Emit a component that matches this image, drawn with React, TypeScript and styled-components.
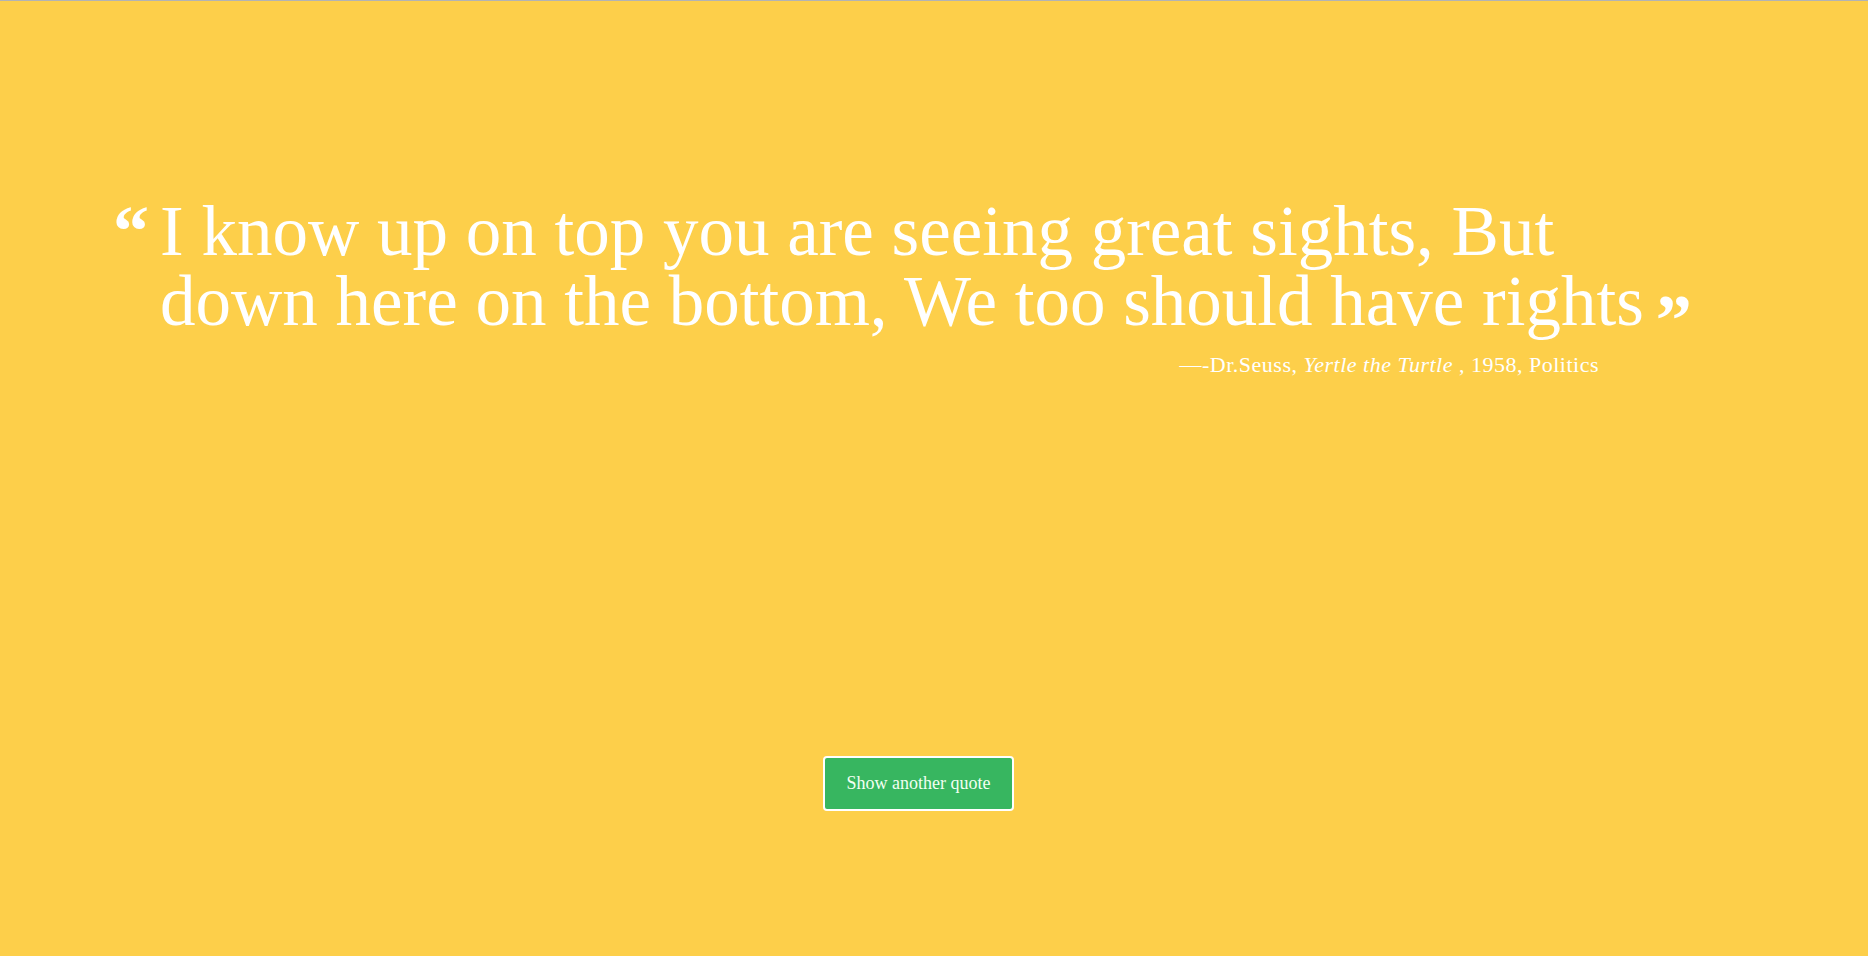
import React from "react";
import styled, { createGlobalStyle } from "styled-components";

const Global = createGlobalStyle`
  html, body {
    margin: 0;
    padding: 0;
    background: #fdcf4a;
  }
  body {
    font-family: "Liberation Serif", "Times New Roman", serif;
  }
`;

const Page = styled.main`
  box-sizing: border-box;
  min-height: 100vh;
  border-top: 1px solid #b3b3b3;
  background: #fdcf4a;
  color: #ffffff;
  display: flex;
  flex-direction: column;
  padding: 195px 0 0 113px;
`;

const QuoteBlock = styled.blockquote`
  margin: 0;
  display: flex;
  align-items: flex-start;
`;

const Mark = styled.span`
  font-family: "Liberation Serif", serif;
  font-weight: 700;
  font-size: 72px;
  line-height: 70px;
  width: 47px;
  flex: none;
`;

const QuoteText = styled.p`
  margin: 0;
  width: 1546px;
  font-size: 71px;
  line-height: 70px;
  font-weight: 400;
`;

const Tail = styled.span`
  white-space: nowrap;
`;

const CloseMark = styled.span`
  font-weight: 700;
  font-size: 72px;
  line-height: 0;
  vertical-align: -19px;
  margin-left: 12px;
`;

const Attribution = styled.p`
  margin: 15px 0 0 0;
  width: 1486px;
  text-align: right;
  font-size: 22px;
  line-height: 28px;
  letter-spacing: 0.5px;
`;

const Title = styled.em`
  font-style: italic;
`;

const ButtonRow = styled.div`
  display: flex;
  justify-content: flex-start;
  padding: 377px 0 0 710px;
`;

const Button = styled.button`
  box-sizing: border-box;
  width: 191px;
  height: 55px;
  background: #37b660;
  border: 2px solid #ffffff;
  border-radius: 4px;
  color: #f2fff2;
  font-family: "Liberation Serif", serif;
  font-size: 18px;
  cursor: pointer;
`;

export default function App() {
  return (
    <>
      <Global />
      <Page>
        <QuoteBlock>
          <Mark>“</Mark>
          <QuoteText>
            I know up on top you are seeing great sights, But down here on the
            bottom, We too should have{" "}
            <Tail>
              rights
              <CloseMark>”</CloseMark>
            </Tail>
          </QuoteText>
        </QuoteBlock>
        <Attribution>
          —-Dr.Seuss, <Title>Yertle the Turtle</Title> , 1958, Politics
        </Attribution>
        <ButtonRow>
          <Button>Show another quote</Button>
        </ButtonRow>
      </Page>
    </>
  );
}
